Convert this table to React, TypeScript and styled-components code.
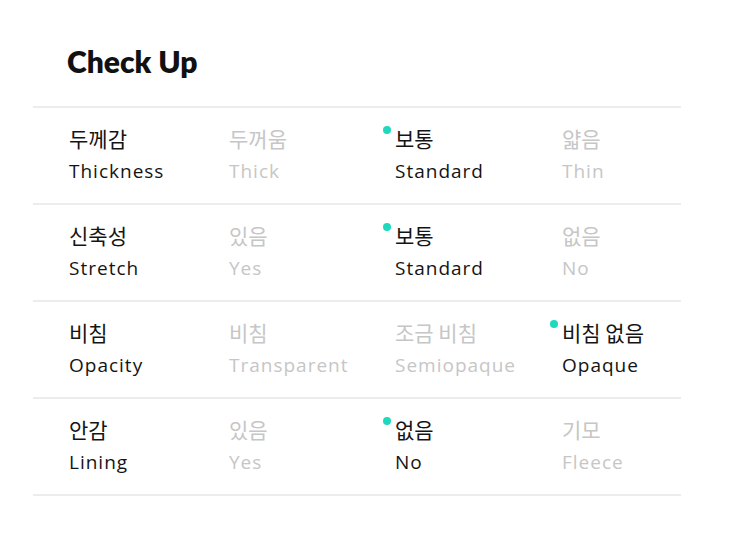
import React from "react";
import styled, { createGlobalStyle } from "styled-components";

const Global = createGlobalStyle`
  html, body { margin: 0; padding: 0; background: #fff; }
  body { font-family: "Open Sans", "Noto Sans CJK KR", sans-serif; }
`;

const Page = styled.div`
  padding: 44px 0 0 33px;
  width: 648px;
`;

const Title = styled.h1`
  margin: 0 0 28px 34px;
  font-family: "Lato", sans-serif;
  font-weight: 800;
  font-size: 30px;
  line-height: 34px;
  color: #111;
`;

const Table = styled.div`
  border-top: 2px solid #ececec;
`;

const Row = styled.div`
  display: grid;
  grid-template-columns: 160px 166px 167px 1fr;
  padding: 16px 0 0 36px;
  height: 97px;
  box-sizing: border-box;
  border-bottom: 2px solid #ececec;
`;

const Cell = styled.div<{ $muted?: boolean }>`
  position: relative;
  display: flex;
  flex-direction: column;
  gap: 5px;
  color: ${(p) => (p.$muted ? "#c6c6c6" : "#141414")};
`;

const Ko = styled.span`
  font-family: "Noto Sans CJK KR", sans-serif;
  font-size: 21px;
  line-height: 28px;
`;

const En = styled.span`
  font-family: "Open Sans", sans-serif;
  font-size: 19px;
  line-height: 28px;
  letter-spacing: 1px;
`;

const Dot = styled.span`
  position: absolute;
  left: -12px;
  top: 2px;
  width: 8px;
  height: 8px;
  border-radius: 50%;
  background: #1ed9bb;
`;

type Opt = { ko: string; en: string; active?: boolean };
type RowData = { ko: string; en: string; options: Opt[] };

const rows: RowData[] = [
  {
    ko: "두께감",
    en: "Thickness",
    options: [
      { ko: "두꺼움", en: "Thick" },
      { ko: "보통", en: "Standard", active: true },
      { ko: "얇음", en: "Thin" },
    ],
  },
  {
    ko: "신축성",
    en: "Stretch",
    options: [
      { ko: "있음", en: "Yes" },
      { ko: "보통", en: "Standard", active: true },
      { ko: "없음", en: "No" },
    ],
  },
  {
    ko: "비침",
    en: "Opacity",
    options: [
      { ko: "비침", en: "Transparent" },
      { ko: "조금 비침", en: "Semiopaque" },
      { ko: "비침 없음", en: "Opaque", active: true },
    ],
  },
  {
    ko: "안감",
    en: "Lining",
    options: [
      { ko: "있음", en: "Yes" },
      { ko: "없음", en: "No", active: true },
      { ko: "기모", en: "Fleece" },
    ],
  },
];

export default function App() {
  return (
    <>
      <Global />
      <Page>
        <Title>Check Up</Title>
        <Table>
          {rows.map((r) => (
            <Row key={r.en}>
              <Cell>
                <Ko>{r.ko}</Ko>
                <En>{r.en}</En>
              </Cell>
              {r.options.map((o) => (
                <Cell key={o.en} $muted={!o.active}>
                  {o.active && <Dot />}
                  <Ko>{o.ko}</Ko>
                  <En>{o.en}</En>
                </Cell>
              ))}
            </Row>
          ))}
        </Table>
      </Page>
    </>
  );
}
